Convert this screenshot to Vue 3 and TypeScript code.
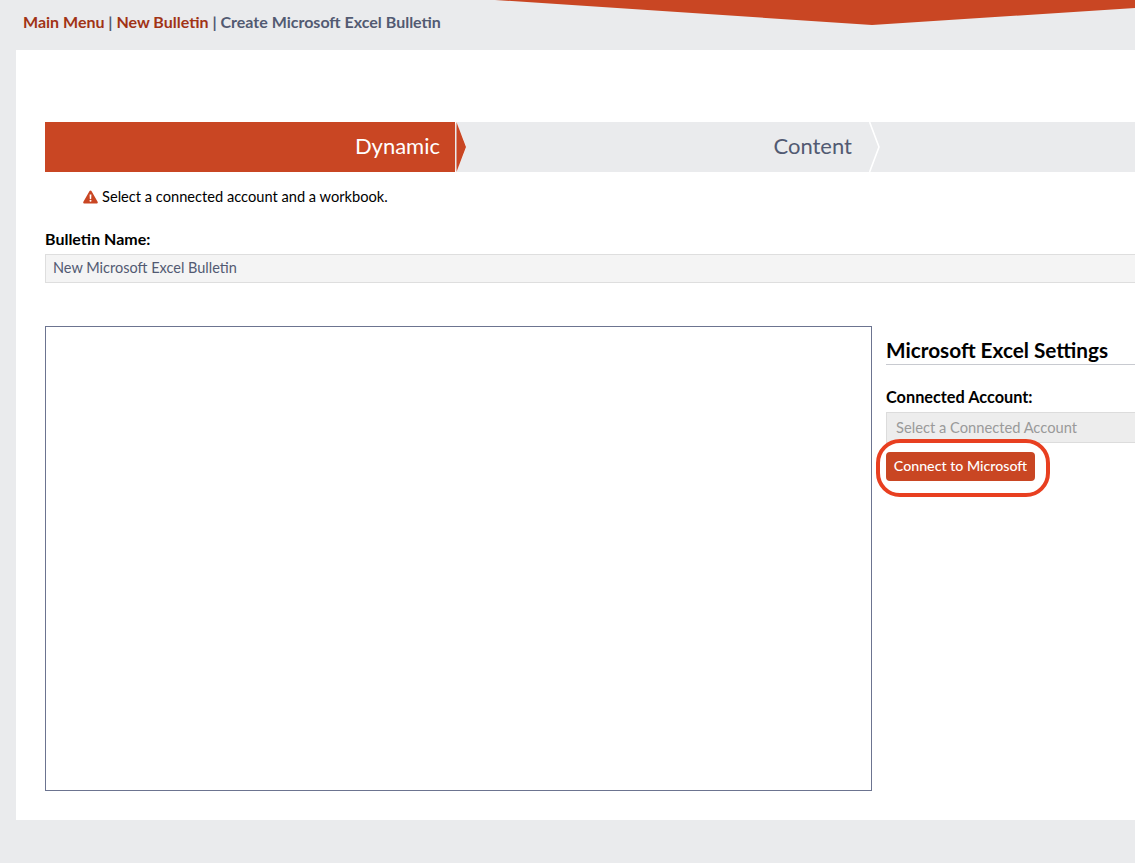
<template>
  <div class="page">
    <svg class="banner" width="640" height="25" viewBox="0 0 640 25" aria-hidden="true">
      <polygon points="0,0 640,0 640,8 377,25" />
    </svg>

    <nav class="crumbs">
      <a>Main Menu</a> | <a>New Bulletin</a> | Create Microsoft Excel Bulletin
    </nav>

    <main class="card">
      <div class="steps">
        <div class="step step-active">
          <span>Dynamic</span>
          <svg class="arrow" width="11" height="50" viewBox="0 0 11 50" aria-hidden="true">
            <polyline class="arrow-line" points="0.6,0 10.6,25 0.6,50" />
            <polygon class="arrow-fill" points="1.5,0 11,25 1.5,50" />
          </svg>
        </div>
        <div class="step">
          <span>Content</span>
          <svg class="arrow" width="11" height="50" viewBox="0 0 11 50" aria-hidden="true">
            <polyline class="arrow-line" points="0.6,0 10,25 0.6,50" />
          </svg>
        </div>
        <div class="step step-rest"></div>
      </div>

      <p class="warning">
        <svg width="15" height="14" viewBox="0 0 15 14" aria-hidden="true">
          <path
            fill-rule="evenodd"
            d="M7.5 .5c.5 0 .9.3 1.1.7l6 10.6c.5.8-.1 1.8-1.1 1.8H1.5c-1 0-1.6-1-1.1-1.8l6-10.6c.2-.4.6-.7 1.1-.7zM6.6 4.4l.2 4.6h1.4l.2-4.6zM7.5 9.7a1 1 0 1 0 0 2 1 1 0 0 0 0-2z"
          />
        </svg>
        Select a connected account and a workbook.
      </p>

      <label class="name-label">Bulletin Name:</label>
      <div class="name-input">{{ bulletinName }}</div>

      <div class="columns">
        <div class="preview"></div>
        <aside class="settings">
          <h2>Microsoft Excel Settings</h2>
          <label class="account-label">Connected Account:</label>
          <div class="account-select">Select a Connected Account</div>
          <div class="connect">
            <button type="button">Connect to Microsoft</button>
            <span class="ring"></span>
          </div>
        </aside>
      </div>
    </main>
  </div>
</template>

<script setup lang="ts">
const bulletinName: string = 'New Microsoft Excel Bulletin'
</script>

<style>
html,
body {
  margin: 0;
  background: #eaebed;
  overflow: hidden;
}
</style>

<style scoped>
.page {
  position: relative;
  width: 1135px;
  height: 863px;
  overflow: hidden;
  background: #eaebed;
  font-family: Lato, 'Open Sans', sans-serif;
  color: #000;
}

.banner {
  position: absolute;
  top: 0;
  left: 495px;
}

.banner polygon {
  fill: #c94623;
}

.crumbs {
  height: 50px;
  box-sizing: border-box;
  padding: 13px 0 0 23px;
  font-size: 16px;
  line-height: 18px;
  font-weight: 700;
  color: #525a72;
}

.crumbs a {
  color: #a13316;
}

.card {
  margin-left: 16px;
  width: 1200px;
  height: 770px;
  box-sizing: border-box;
  padding: 72px 0 0 29px;
  background: #fff;
}

.steps {
  display: flex;
  height: 50px;
  background: #eaebed;
}

.step {
  position: relative;
  display: flex;
  align-items: center;
  justify-content: flex-end;
  width: 414px;
  padding: 0 17px 3px 0;
  box-sizing: border-box;
  font-size: 22px;
  color: #525a72;
}

.step-active {
  width: 410px;
  padding-right: 15px;
  background: #c94623;
  color: #fff;
}

.step-rest {
  flex: 1;
}

.arrow {
  position: absolute;
  top: 0;
  left: 100%;
  z-index: 1;
}

.arrow-line {
  fill: none;
  stroke: #fff;
  stroke-width: 1.6;
}

.arrow-fill {
  fill: #c94623;
}

.warning {
  display: flex;
  align-items: center;
  gap: 4px;
  height: 18px;
  margin: 16px 0 0 38px;
  font-size: 14.65px;
  line-height: 18px;
}

.warning svg {
  fill: #c94623;
  flex: none;
}

.name-label {
  display: block;
  margin-top: 24px;
  font-size: 16px;
  line-height: 18px;
  font-weight: 700;
}

.name-input {
  height: 29px;
  margin-top: 6px;
  padding-left: 7px;
  box-sizing: border-box;
  border: 1px solid #dedede;
  background: #f4f4f4;
  font-size: 14.5px;
  line-height: 26px;
  color: #525a72;
}

.columns {
  display: flex;
  gap: 14px;
  margin-top: 43px;
}

.preview {
  flex: none;
  width: 827px;
  height: 465px;
  box-sizing: border-box;
  border: 1px solid #6c7490;
}

.settings {
  flex: 1;
}

.settings h2 {
  margin: 0;
  height: 39px;
  box-sizing: border-box;
  padding-top: 12px;
  border-bottom: 1px solid #c8cad0;
  font-size: 20.75px;
  line-height: 24px;
  font-weight: 700;
}

.account-label {
  display: block;
  margin-top: 23px;
  font-size: 16.3px;
  line-height: 18px;
  font-weight: 700;
}

.account-select {
  height: 31px;
  margin-top: 6px;
  padding-left: 9px;
  box-sizing: border-box;
  border: 1px solid #dcdcdc;
  background: #ededed;
  font-size: 14.7px;
  line-height: 28px;
  color: #9a9a9a;
}

.connect {
  position: relative;
  width: 149px;
  margin-top: 9px;
}

.connect button {
  display: block;
  width: 149px;
  height: 29px;
  padding: 0 0 2px;
  border: 0;
  border-radius: 4px;
  background: #c94623;
  color: #fff;
  font-family: inherit;
  font-size: 14.2px;
  font-weight: 500;
}

.ring {
  position: absolute;
  top: -13px;
  left: -10px;
  width: 174px;
  height: 58px;
  box-sizing: border-box;
  border: 4px solid #e83f20;
  border-radius: 24px;
}
</style>
